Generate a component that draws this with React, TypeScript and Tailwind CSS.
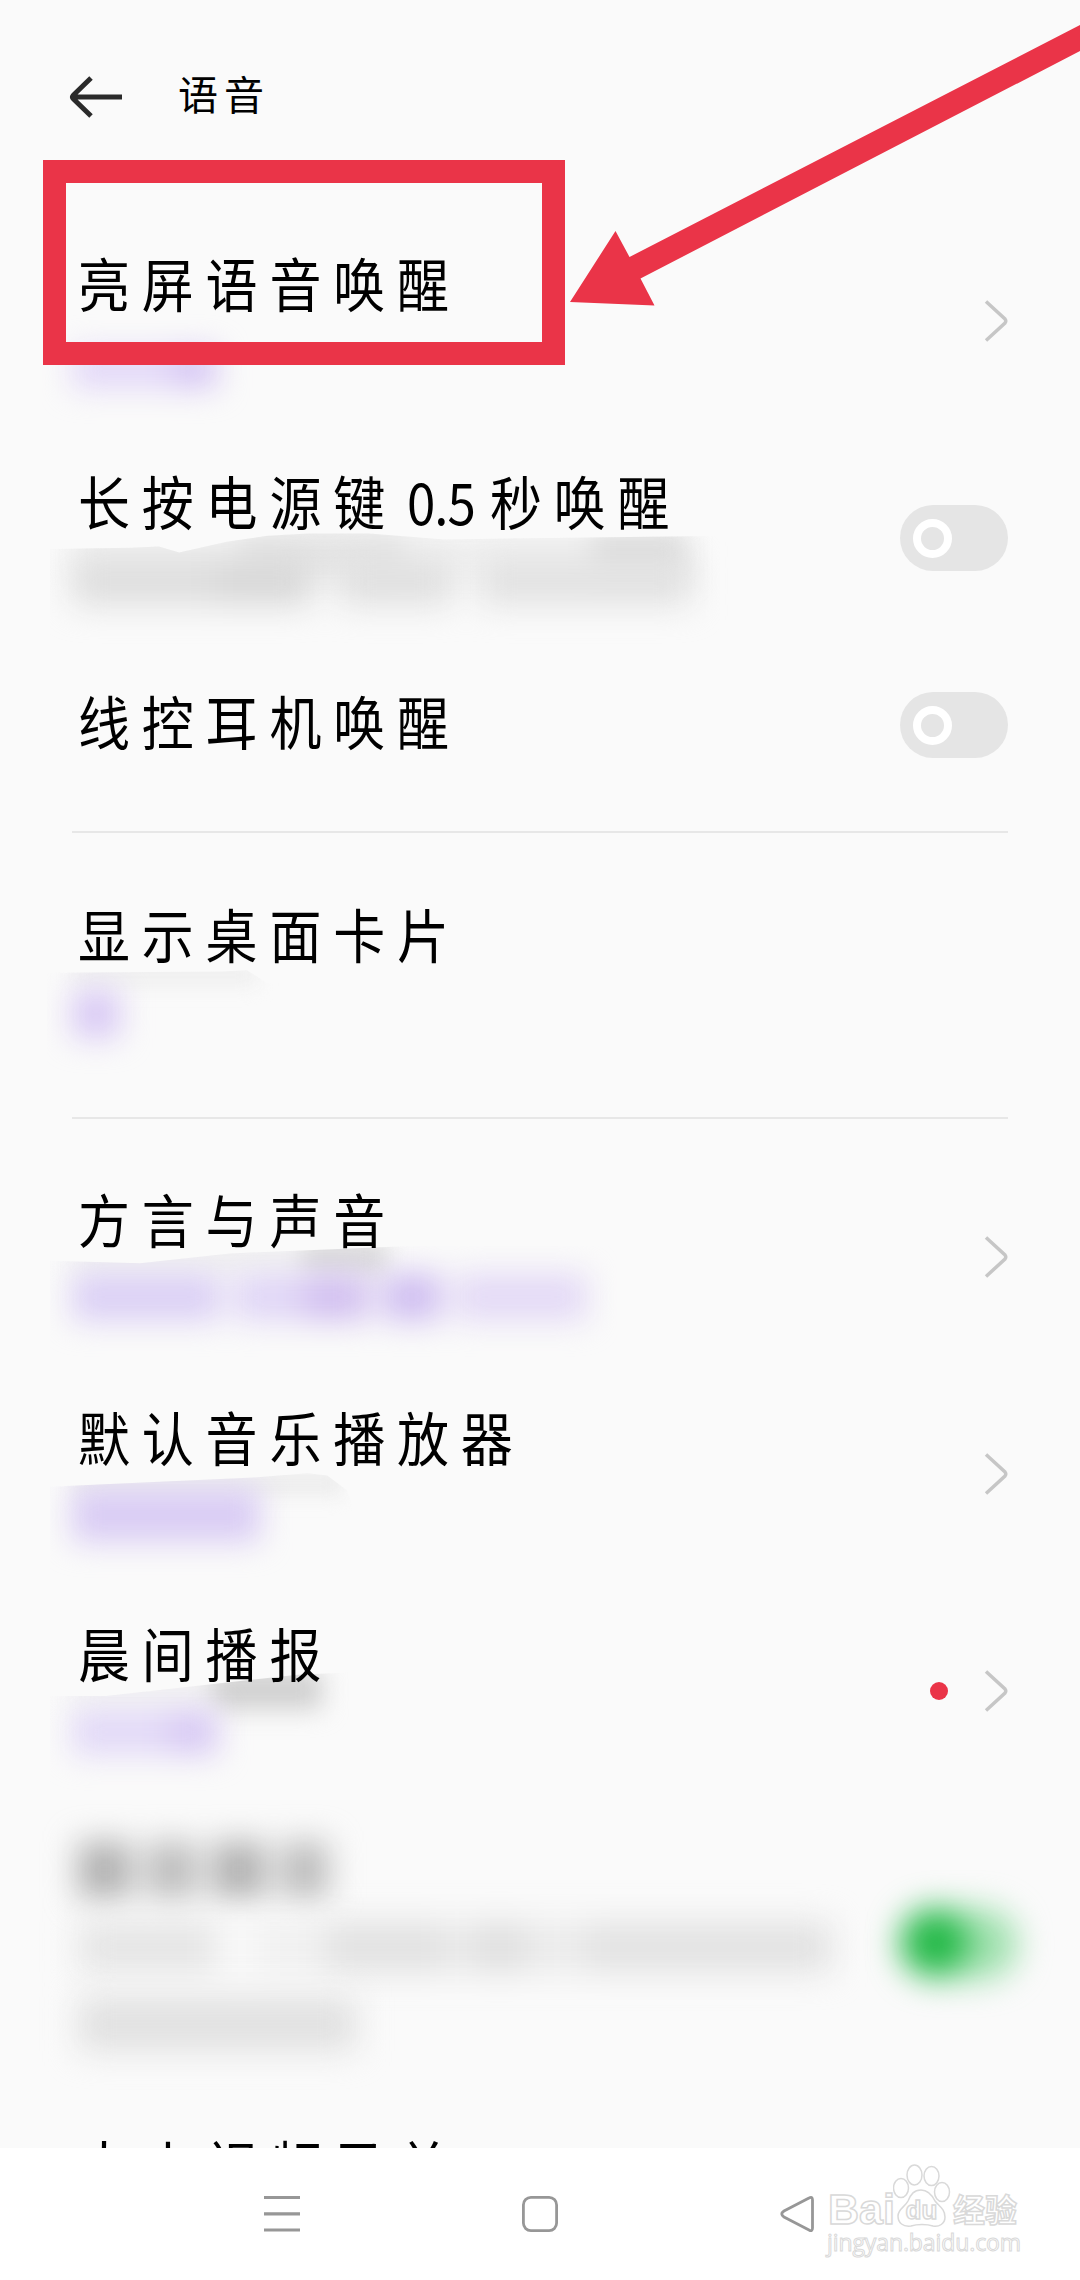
import type { ReactNode } from "react";

const sans = "font-['Noto_Sans_CJK_SC',sans-serif]";

interface RowProps {
  title: ReactNode;
  className: string;
  children?: ReactNode;
  end?: ReactNode;
}

export default function App() {
  return (
    <div className={`relative flex h-[2280px] w-[1080px] flex-col overflow-hidden bg-[#fafafa] ${sans}`}>
      <header className="flex h-[195px] shrink-0 items-start pt-[63px] pl-[68px]">
        <svg className="mt-[12px] h-11 w-14" viewBox="0 0 56 44" fill="none" stroke="#2a2a2a" strokeWidth="5">
          <path d="M54 22H6M23 3L5.500 20Q3.500 22 5.500 24L23 41" />
        </svg>
        <h1 className="ml-[54px] text-[40px] leading-[60px] tracking-[6px] text-black">语音</h1>
      </header>

      <main className="flex h-[1953px] shrink-0 flex-col overflow-hidden">
        <Row title="亮屏语音唤醒" className="h-[245px] pt-[57px]" end={<div className="pt-[46px]"><Chevron /></div>}>
          <div className="mt-[38px] flex h-[38px] w-[145px] blur-[15px]">
            <div className="w-[100px] bg-[#e2d7f8]" />
            <div className="flex-1 bg-[#d5c5f4]" />
          </div>
        </Row>
        <Row
          title={
            <>
              长按电源键<span className="inline-block w-[93px] pl-[10px] text-[51px] tracking-[-1px]">0.5</span>秒唤醒
            </>
          }
          className="h-[220px] pt-[30px]"
          end={<div className="pt-[35px]"><Toggle /></div>}
        >
          <div className="mt-px -ml-[22px] flex h-[120px] w-[680px] flex-col pl-[22px] [clip-path:polygon(0_15%,12%_14%,16%_13%,19%_18%,26%_9%,32%_4%,38%_2%,47%_2%,58%_7%,100%_4%,100%_100%,0_100%)]">
            <div className="flex h-[46px] w-[615px] blur-[13px]">
              <div className="w-[170px] bg-[#f0f0f0]" />
              <div className="w-[160px] bg-[#e4e4e4]" />
              <div className="w-[190px] bg-[#f0f0f0]" />
              <div className="flex-1 bg-[#dcdcdc]" />
            </div>
            <div className="-mt-[20px] flex h-[48px] w-[620px] gap-[26px] blur-[16px]">
              <div className="flex w-[240px]">
                <div className="w-[140px] bg-[#dedede]" />
                <div className="flex-1 bg-[#d8d8d8]" />
              </div>
              <div className="w-[115px] bg-[#e0e0e0]" />
              <div className="flex-1 bg-[#e2e2e2]" />
            </div>
          </div>
        </Row>
        <Row title="线控耳机唤醒" className="h-[171px] pt-[30px]" end={<div className="pt-[2px]"><Toggle /></div>} />
        <Divider />
        <Row title="显示桌面卡片" className="h-[284px] pt-[70px]">
          <div className="mt-px h-[125px] w-[250px] [clip-path:polygon(-10%_7%,60%_6%,70%_5%,78%_15%,100%_15%,100%_100%,-10%_100%)]">
            <div className="h-[22px] w-[185px] bg-[#efefef] blur-[9px]" />
            <div className="mt-[4px] h-[48px] w-[48px] bg-[#d9caf5] blur-[15px]" />
          </div>
        </Row>
        <Divider />
        <Row title="方言与声音" className="h-[250px] pt-[69px]" end={<div className="pt-[46px]"><Chevron /></div>}>
          <div className="mt-[-7px] -ml-[22px] flex h-[124px] w-[600px] flex-col pl-[22px] [clip-path:polygon(0_16%,15%_18%,30%_10%,60%_4%,100%_4%,100%_100%,0_100%)]">
            <div className="flex h-[34px] w-[315px] blur-[11px]">
              <div className="w-[230px] bg-[#f0f0f0]" />
              <div className="flex-1 bg-[#dadada]" />
            </div>
            <div className="mt-[-2px] flex h-[48px] w-[515px] gap-[14px] blur-[15px]">
              <div className="w-[148px] bg-[#dbd0f5]" />
              <div className="flex w-[135px]">
                <div className="w-[70px] bg-[#e0d6f6]" />
                <div className="flex-1 bg-[#d2c0f0]" />
              </div>
              <div className="w-[58px] bg-[#d0bff1]" />
              <div className="flex-1 bg-[#e4daf6]" />
            </div>
          </div>
        </Row>
        <Row title="默认音乐播放器" className="h-[216px] pt-[37px]" end={<div className="pt-[45px]"><Chevron /></div>}>
          <div className="mt-[4px] -ml-[22px] flex h-[112px] w-[330px] flex-col pl-[22px] [clip-path:polygon(0_15%,60%_7%,78%_3%,84%_5%,90%_18%,100%_100%,0_100%)]">
            <div className="h-[26px] w-[270px] bg-[#ededed] blur-[9px]" />
            <div className="-mt-[8px] h-[54px] w-[188px] bg-[#d9ccf4] blur-[15px]" />
          </div>
        </Row>
        <Row
          title="晨间播报"
          className="h-[216px] pt-[37px]"
          end={
            <div className="flex items-center gap-[36px] self-start pt-[46px]">
              <span className="size-[18px] rounded-full bg-[#ea3448]" />
              <Chevron />
            </div>
          }
        >
          <div className="mt-[-11px] -ml-[22px] flex h-[125px] w-[330px] flex-col pl-[22px] [clip-path:polygon(0_20%,17%_20%,75%_3%,100%_0,100%_100%,0_100%)]">
            <div className="flex h-[38px] w-[250px] blur-[12px]">
              <div className="w-[140px] bg-[#f2f2f2]" />
              <div className="flex-1 bg-[#cfcfcf]" />
            </div>
            <div className="flex h-[46px] w-[146px] blur-[15px]">
              <div className="w-[96px] bg-[#e2d9f7]" />
              <div className="flex-1 bg-[#d8caf4]" />
            </div>
          </div>
        </Row>

        <div className="flex h-[310px] shrink-0 justify-between pt-[41px] pr-[62px] pl-[78px]">
          <div>
            <div className="flex h-[56px] gap-[16px] blur-[16px]">
              <div className="w-[54px] bg-[#b0b0b0]" />
              <div className="w-[48px] bg-[#bababa]" />
              <div className="w-[54px] bg-[#b0b0b0]" />
              <div className="w-[46px] bg-[#bababa]" />
            </div>
            <div className="mt-[24px] flex h-[50px] blur-[16px]">
              <div className="w-[138px] bg-[#e5e5e5]" />
              <div className="w-[40px] bg-[#f8f8f8]" />
              <div className="w-[70px] bg-[#f0f0f0]" />
              <div className="w-[120px] bg-[#e1e1e1]" />
              <div className="w-[26px] bg-[#ebebeb]" />
              <div className="w-[54px] bg-[#dfdfdf]" />
              <div className="w-[60px] bg-[#ebebeb]" />
              <div className="w-[246px] bg-[#e2e2e2]" />
            </div>
            <div className="mt-[25px] h-[54px] w-[278px] bg-[#e1e1e1] blur-[16px]" />
          </div>
          <div className="mt-[66px] flex h-[72px] w-[118px] rounded-full bg-[#9ee0ad] blur-[16px]">
            <div className="size-[68px] rounded-full bg-[#24b948]" />
          </div>
        </div>
        <Row title="大小视频录单" className="h-[74px] pt-[24px]" />
      </main>

      <nav className="flex h-[132px] shrink-0 items-start bg-white pt-[46px] pl-[262px]">
        <svg className="h-10 w-10 shrink-0" viewBox="0 0 40 40" stroke="#979797" strokeWidth="3.200">
          <path d="M2 3.500H38M2 19.800H38M2 36H38" />
        </svg>
        <svg className="ml-[218px] h-10 w-10 shrink-0" viewBox="0 0 40 40" fill="none" stroke="#979797" strokeWidth="2.800">
          <rect x="3.400" y="3.400" width="33.200" height="33.200" rx="7.500" />
        </svg>
        <svg className="ml-[219px] h-10 w-10 shrink-0" viewBox="0 0 40 40" fill="none" stroke="#979797" strokeWidth="2.800">
          <path d="M33.500 6V34Q33.500 38 30 36L5 23Q0.500 20 5 17L30 4Q33.500 2 33.500 6Z" />
        </svg>
        <Watermark />
      </nav>

      {/* Highlight frame and pointer */}
      <div className="absolute top-[160px] left-[43px] h-[205px] w-[522px] border-[23.500px] border-[#ea3448]" />
      <svg className="absolute top-0 left-[560px] h-[320px] w-[520px]" viewBox="0 0 520 320" fill="#ea3448">
        <path d="M10 302L55.500 231L69.500 257L520 25V51L80.500 278.500L94.500 305.500Z" />
      </svg>
    </div>
  );
}

function Row({ title, className, children, end }: RowProps) {
  return (
    <div className={`flex shrink-0 justify-between px-18 ${className}`}>
      <div>
        <p className="relative z-10 scale-y-[1.12] pl-[6px] text-[52px] leading-[60px] tracking-[11.800px] whitespace-nowrap text-black">
          {title}
        </p>
        {children}
      </div>
      {end}
    </div>
  );
}

function Divider() {
  return <div className="mx-18 h-0.5 shrink-0 bg-[#e7e7e7]" />;
}

function Chevron() {
  return (
    <svg className="h-[46px] w-6" viewBox="0 0 24 46" fill="none">
      <path d="M2 3.500L21 21Q22.500 23 21 25L2 42.500" stroke="#c6c6c6" strokeWidth="3.500" />
    </svg>
  );
}

function Toggle() {
  return (
    <div className="flex h-[66px] w-[108px] items-center rounded-full bg-[#e5e5e5] pl-[13px]">
      <div className="size-[39px] rounded-full border-8 border-white" />
    </div>
  );
}

function Watermark() {
  return (
    <div className="-mt-[4px] ml-[9px] text-white [-webkit-text-stroke:1.500px_#d9d9d9]">
      <div className="flex h-[38px] w-[192px]">
        <span className="w-[65px] font-['Liberation_Sans',sans-serif] text-[43px] leading-[38px] font-bold">Bai</span>
        <svg className="-mt-[29px] h-[66px] w-[60px] shrink-0" viewBox="0 0 60 66" fill="#fff" stroke="#d9d9d9" strokeWidth="1.500">
          <ellipse cx="8" cy="27" rx="7.500" ry="9.500" />
          <ellipse cx="21.500" cy="14" rx="7.500" ry="10" />
          <ellipse cx="38.500" cy="15" rx="7.500" ry="9.500" />
          <ellipse cx="49" cy="31" rx="7.500" ry="9.500" />
          <path d="M28 29C35 29 39 34 42 40C46 45 52 48 52 56C52 63 46 66 40 65C34 63 24 63 18 65C10 66 5 62 5 55C5 48 12 46 15 40C18 33 21 29 28 29Z" />
          <text x="12.500" y="58" fontSize="26" fontWeight="bold" fontFamily="Liberation Sans, sans-serif">du</text>
        </svg>
        <span className={`text-[32px] leading-[36px] font-bold whitespace-nowrap ${sans}`}>经验</span>
      </div>
      <p className="-ml-px font-['Open_Sans',sans-serif] text-[23px] leading-[28px] tracking-[-0.100px] [-webkit-text-stroke:1px_#d9d9d9]">
        jingyan.baidu.com
      </p>
    </div>
  );
}
